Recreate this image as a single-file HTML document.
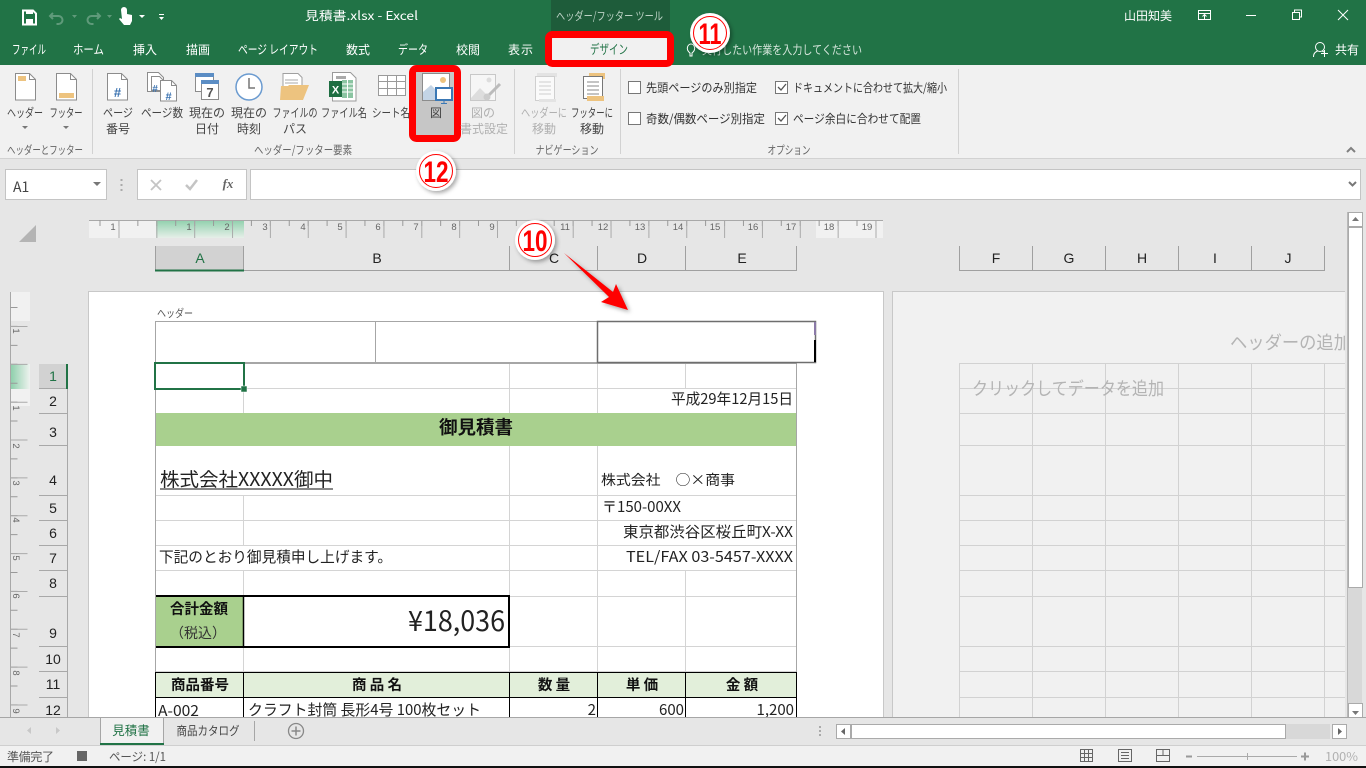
<!DOCTYPE html>
<html lang="ja"><head><meta charset="utf-8"><title>見積書.xlsx - Excel</title>
<style>
html,body{margin:0;padding:0;width:1366px;height:768px;overflow:hidden;background:#e6e6e6}
svg{display:block;position:absolute;left:0;top:0}
text{font-family:"Liberation Sans","Noto Sans CJK JP",sans-serif;font-size:12px;fill:#333}
.r text{font-family:"Noto Sans CJK JP","Liberation Sans",sans-serif}
.w text{fill:#fff}
.c text{text-anchor:middle}
.rb text{font-size:12px;fill:#444;text-anchor:middle}
.cell text{font-family:"Noto Sans CJK JP","Liberation Sans",sans-serif;font-size:15px;fill:#222}
.rul text{font-size:9.5px;fill:#666;text-anchor:middle}
.hd text{font-size:14px;fill:#222;text-anchor:middle}
.th text{font-family:"Noto Sans CJK JP",sans-serif;font-size:14.5px;font-weight:700;fill:#111;text-anchor:middle}
.num text{font-family:"Liberation Sans",sans-serif;font-weight:700;font-size:30px;fill:#f00;text-anchor:middle}
</style></head><body>
<svg width="1366" height="768" viewBox="0 0 1366 768" xmlns="http://www.w3.org/2000/svg">
<defs>
<linearGradient id="gh" x1="0" y1="0" x2="0" y2="1"><stop offset="0" stop-color="#8fd0ac"/><stop offset="1" stop-color="#e6efe9"/></linearGradient>
<linearGradient id="gv" x1="0" y1="0" x2="1" y2="0"><stop offset="0" stop-color="#8fd0ac"/><stop offset="1" stop-color="#eef2ef"/></linearGradient>
<filter id="sh" x="-30%" y="-30%" width="170%" height="170%"><feDropShadow dx="2" dy="2" stdDeviation="2" flood-color="#000" flood-opacity=".35"/></filter>
<clipPath id="p2"><rect x="893" y="292" width="452" height="425"/></clipPath>
</defs>

<!-- chrome -->
<rect width="1366" height="65" fill="#217346"/>
<rect x="551" y="0" width="119" height="32" fill="#1e5c3a"/>
<rect y="65" width="1366" height="93" fill="#f1f1f1"/>
<rect y="158" width="1366" height="1" fill="#d2d2d2"/>

<!-- QAT -->
<g fill="none">
<path d="M23 10.500h10l3 3v11h-13z" stroke="#fff" stroke-width="2"/>
<rect x="26" y="10" width="7" height="4" fill="#fff"/><rect x="26" y="19" width="7" height="5" fill="#fff"/>
<path d="M53 13l-3 3 3 3M50.500 16h8a4 4 0 0 1 0 8h-2" stroke="#5f9a7a" stroke-width="2"/>
<path d="M97 13l3 3-3 3M99.500 16h-8a4 4 0 0 0 0 8h2" stroke="#5f9a7a" stroke-width="2"/>
</g>
<path d="M72 15h5l-2.500 3zM107 15h5l-2.500 3z" fill="#5f9a7a"/>
<path d="M139 15h6l-3 3z" fill="#fff"/>
<path d="M121 10a3 3 0 0 1 6 0v4l5 1v6l-2 4h-6l-5-6 1-1 2 1z" fill="#fff"/>
<path d="M159 14h5v1h-5zM159 17h5l-2.500 3z" fill="#fff"/>

<g class="r w">
<text x="305" y="20" textLength="113" lengthAdjust="spacingAndGlyphs">見積書.xlsx  -  Excel</text>
<text x="556" y="20" textLength="107" lengthAdjust="spacingAndGlyphs" style="font-size:11.500px;fill:#bcd2c5">ヘッダー/フッター ツール</text>
<text x="1124" y="20" textLength="48" lengthAdjust="spacingAndGlyphs">山田知美</text>
<text x="12" y="54" textLength="34" lengthAdjust="spacingAndGlyphs" style="font-size:12.500px">ファイル</text>
<text x="73" y="54" textLength="31" lengthAdjust="spacingAndGlyphs" style="font-size:12.500px">ホーム</text>
<text x="133" y="54" textLength="24">挿入</text>
<text x="186" y="54" textLength="24">描画</text>
<text x="238" y="54" textLength="80" lengthAdjust="spacingAndGlyphs" style="font-size:12.500px">ページ レイアウト</text>
<text x="346" y="54" textLength="24">数式</text>
<text x="398" y="54" textLength="30" lengthAdjust="spacingAndGlyphs" style="font-size:12.500px">データ</text>
<text x="456" y="54" textLength="24">校閲</text>
<text x="508" y="54" textLength="25">表示</text>
<text x="702" y="54" textLength="160" lengthAdjust="spacingAndGlyphs" style="fill:#d5e5db">実行したい作業を入力してください</text>
<text x="1335" y="54" textLength="24">共有</text>
</g>
<!-- bulb -->
<path d="M690 56v-3c-5-4-2-9 1-9s6 5 1 9v3z" fill="none" stroke="#fff"/>
<!-- window controls -->
<g fill="none" stroke="#fff">
<rect x="1198.500" y="10.500" width="12" height="9"/><path d="M1198 13.500h13M1204.500 19v-4M1202.500 16.500l2-2 2 2"/>
<path d="M1246 15.500h10"/>
<rect x="1292.500" y="12.500" width="7" height="7"/><path d="M1294.500 12v-2h7v7h-2"/>
<path d="M1338 10l10 10M1348 10l-10 10"/>
<circle cx="1320" cy="47" r="4.500"/><path d="M1313.500 57c0-4 2-5 4-6M1322 51l2 1"/><path d="M1324.500 50v7M1321 53.500h7"/>
</g>

<!-- design tab + highlight -->
<rect x="548.500" y="34.500" width="122" height="29" rx="4" fill="#f1f1f1" stroke="#f00" stroke-width="7"/>
<text x="609" y="54" text-anchor="middle" textLength="38" lengthAdjust="spacingAndGlyphs" style="font-family:'Noto Sans CJK JP',sans-serif;fill:#217346;font-size:13px">デザイン</text>

<!-- separators -->
<g fill="#d2d2d2"><rect x="92" y="69" width="1" height="85"/><rect x="514" y="69" width="1" height="85"/><rect x="620" y="69" width="1" height="85"/><rect x="958" y="69" width="1" height="85"/></g>
<path d="M1347 152l4-4 4 4" fill="none" stroke="#808080" stroke-width="2"/>

<!-- 図 highlight -->
<rect x="412.500" y="68.500" width="45" height="70" rx="4" fill="#c6c6c6" stroke="#f00" stroke-width="7"/>

<!-- ribbon icons -->
<g fill="#fff" stroke="#8c8c8c">
<path d="M15.500 73.500h14l6 6v20.500h-20z"/>
<path d="M56.500 73.500h14l6 6v20.500h-20z"/>
<path d="M107.500 73.500h14l6 6v20.500h-20z"/>
<path d="M147.500 72.500h11l5 5v14h-16z"/>
<path d="M151.500 76.500h8l4 4v10h-12z"/>
<path d="M160.500 80.500h11l5 5v15.500h-16z"/>
</g>
<path d="M29.500 73.500v6h6M70.500 73.500v6h6M121.500 73.500v6h6M171.500 80.500v5h5" fill="none" stroke="#8c8c8c"/>
<rect x="18" y="76" width="8" height="5" fill="#edc37f"/>
<rect x="59" y="93" width="15" height="5" fill="#edc37f"/>
<text x="117.500" y="97" text-anchor="middle" style="font-size:13px;font-weight:700;fill:#3a72b0">#</text>
<text x="155" y="92" text-anchor="middle" style="font-size:10px;font-weight:700;fill:#3a72b0">#</text>
<text x="168.500" y="100" text-anchor="middle" style="font-size:11px;font-weight:700;fill:#3a72b0">#</text>
<!-- calendar -->
<rect x="195.500" y="73.500" width="18" height="18" fill="#fff" stroke="#8c8c8c"/><rect x="195" y="73" width="19" height="4" fill="#5b8dc4"/>
<rect x="201.500" y="80.500" width="17" height="19" fill="#fff" stroke="#8c8c8c"/><rect x="201" y="80" width="18" height="4" fill="#5b8dc4"/>
<text x="210" y="97" text-anchor="middle" style="font-size:13px;font-weight:700;fill:#555">7</text>
<!-- clock -->
<circle cx="249" cy="87" r="13" fill="#fff" stroke="#6b9bd0" stroke-width="1.500"/><path d="M249 78v10h6" fill="none" stroke="#777" stroke-width="1.500"/>
<!-- folder -->
<path d="M283 73.500h15l4 4v10h-19z" fill="#fff" stroke="#a0a0a0"/>
<path d="M285 80h13M285 83h13" stroke="#aaa"/>
<path d="M280 100l1-14h7l1-1h20l-6 15z" fill="#edc37f"/>
<!-- excel -->
<path d="M332.500 72.500h18l5.500 5.500v23h-23.500z" fill="#fff" stroke="#9a9a9a"/>
<rect x="342" y="80" width="11" height="18" fill="#8bc5a2"/><path d="M342 84h11M342 88h11M342 92h11M347.500 80v18" stroke="#fff"/>
<rect x="336" y="76" width="10" height="3" fill="#aaa"/>
<rect x="329" y="81" width="13" height="16" fill="#1e6e42"/>
<text x="335.500" y="93.500" text-anchor="middle" style="font-size:11px;font-weight:700;fill:#fff">X</text>
<!-- sheet grid -->
<path d="M378.500 75.500h27v20h-27zM378.500 81.500h27M378.500 88.500h27M387.500 75.500v20M396.500 75.500v20" fill="#fff" stroke="#9a9a9a"/>
<!-- picture -->
<rect x="422.500" y="73.500" width="27" height="27" fill="#fff" stroke="#8c8c8c"/>
<circle cx="443" cy="80" r="3" fill="#edc37f"/>
<path d="M423 100v-8l8-7 9 9 1 6z" fill="#c3d4e6"/>
<rect x="436" y="88" width="16" height="12" fill="#fff" stroke="#3a78b5" stroke-width="2"/><path d="M444 100v3M441 103.500h6" stroke="#3a78b5"/>
<!-- picture format -->
<rect x="470.500" y="74.500" width="25" height="26" fill="#f6f6f6" stroke="#c8c8c8"/>
<circle cx="489" cy="80" r="2.500" fill="#ddd"/><path d="M471 98l9-10 8 8-2 4h-15z" fill="#ddd"/>
<path d="M500 84l-11 11" stroke="#bbb" stroke-width="3"/><circle cx="487" cy="97" r="3.500" fill="#ccc"/>
<!-- nav -->
<rect x="537" y="73" width="20" height="4" fill="#e3e3e3"/>
<rect x="535.500" y="76.500" width="19" height="24" fill="#fafafa" stroke="#cfcfcf"/><path d="M539 82h12M539 86h12M539 90h12M539 94h12" stroke="#cfcfcf"/>
<rect x="539" y="99" width="17" height="3" fill="#e3e3e3"/>
<rect x="589" y="73" width="16" height="3" fill="#edc37f"/><rect x="602" y="73" width="3" height="6" fill="#edc37f"/>
<rect x="583.500" y="76.500" width="19" height="22" fill="#fff" stroke="#777"/><path d="M587 82h12M587 86h12M587 90h12M587 94h12" stroke="#888"/>
<rect x="587" y="96" width="17" height="5" fill="#edc37f"/>

<g class="r rb">
<text x="25" y="117" textLength="36" lengthAdjust="spacingAndGlyphs">ヘッダー</text>
<text x="66" y="117" textLength="33" lengthAdjust="spacingAndGlyphs">フッター</text>
<text x="118" y="117" textLength="30" lengthAdjust="spacingAndGlyphs">ページ</text><text x="118" y="133">番号</text>
<text x="162" y="117" textLength="42" lengthAdjust="spacingAndGlyphs">ページ数</text>
<text x="207" y="117">現在の</text><text x="207" y="133">日付</text>
<text x="249" y="117">現在の</text><text x="249" y="133">時刻</text>
<text x="295" y="117" textLength="45" lengthAdjust="spacingAndGlyphs">ファイルの</text><text x="295" y="133">パス</text>
<text x="344" y="117" textLength="46" lengthAdjust="spacingAndGlyphs">ファイル名</text>
<text x="391" y="117" textLength="38" lengthAdjust="spacingAndGlyphs">シート名</text>
<text x="436" y="117">図</text>
<text x="483" y="117" style="fill:#b0b0b0">図の</text><text x="484" y="133" style="fill:#b0b0b0">書式設定</text>
<text x="544" y="117" textLength="46" lengthAdjust="spacingAndGlyphs" style="fill:#b0b0b0">ヘッダーに</text><text x="544" y="133" style="fill:#b0b0b0">移動</text>
<text x="592" y="117" textLength="42" lengthAdjust="spacingAndGlyphs">フッターに</text><text x="592" y="133">移動</text>
<text x="45" y="154" textLength="76" lengthAdjust="spacingAndGlyphs" style="fill:#666;font-size:11.500px">ヘッダーとフッター</text>
<text x="303" y="154" textLength="98" lengthAdjust="spacingAndGlyphs" style="fill:#666;font-size:11.500px">ヘッダー/フッター要素</text>
<text x="567" y="154" textLength="63" lengthAdjust="spacingAndGlyphs" style="fill:#666;font-size:11.500px">ナビゲーション</text>
<text x="789" y="154" textLength="43" lengthAdjust="spacingAndGlyphs" style="fill:#666;font-size:11.500px">オプション</text>
</g>
<path d="M22 126h6l-3 3zM63 126h6l-3 3z" fill="#777"/>

<!-- checkboxes -->
<g fill="#fff" stroke="#777">
<rect x="628.500" y="81.500" width="12" height="12"/><rect x="628.500" y="112.500" width="12" height="12"/>
<rect x="775.500" y="81.500" width="12" height="12"/><rect x="775.500" y="112.500" width="12" height="12"/>
</g>
<path d="M778 87l3 3 5-6M778 118l3 3 5-6" fill="none" stroke="#555" stroke-width="1.300"/>
<g class="r">
<text x="646" y="92" textLength="111" lengthAdjust="spacingAndGlyphs">先頭ページのみ別指定</text>
<text x="646" y="123" textLength="119" lengthAdjust="spacingAndGlyphs">奇数/偶数ページ別指定</text>
<text x="793" y="92" textLength="154" lengthAdjust="spacingAndGlyphs">ドキュメントに合わせて拡大/縮小</text>
<text x="793" y="123" textLength="128" lengthAdjust="spacingAndGlyphs">ページ余白に合わせて配置</text>
</g>

<!-- formula bar -->
<rect x="5.500" y="169.500" width="101" height="30" fill="#fff" stroke="#c4c4c4"/>
<text x="13" y="192" style="font-family:'Noto Sans CJK JP',sans-serif;font-size:14px;fill:#444">A1</text>
<path d="M93 182h8l-4 4z" fill="#777"/>
<path d="M121.500 179v2M121.500 184v2M121.500 189v2" stroke="#aaa" stroke-width="2"/>
<rect x="137.500" y="169.500" width="109" height="30" fill="#fff" stroke="#c4c4c4"/>
<rect x="250.500" y="169.500" width="1110" height="30" fill="#fff" stroke="#c4c4c4"/>
<path d="M151 180l10 10M161 180l-10 10" stroke="#c4c4c4" stroke-width="1.800"/>
<path d="M186 185l4 4 7-9" fill="none" stroke="#c4c4c4" stroke-width="2.500"/>
<text x="228" y="188" text-anchor="middle" style="font-family:'Liberation Serif',serif;font-style:italic;font-weight:700;font-size:13px;fill:#666">fx</text>
<path d="M1349 182l3.500 3.500 3.500-3.500" fill="none" stroke="#777" stroke-width="2"/>

<!-- corner -->
<path d="M36 225v17h-17z" fill="#b4b4b4"/>

<!-- horizontal ruler -->
<rect x="89" y="220" width="67" height="18" fill="#f1f1f1"/>
<rect x="156" y="220" width="88" height="18" fill="url(#gh)"/>
<rect x="816" y="220" width="67" height="18" fill="#f1f1f1"/>
<rect x="89" y="220" width="794" height="1" fill="#a8a8a8"/>
<line x1="99.500" y1="223" x2="883" y2="223" stroke="#999" stroke-width="6" stroke-dasharray="1 17.925"/>
<line x1="118.500" y1="229" x2="883" y2="229" stroke="#aaa" stroke-width="18" stroke-dasharray="1 36.850"/>
<g class="rul">
<text x="113" y="230">1</text><text x="189" y="230">1</text><text x="227" y="230">2</text><text x="265" y="230">3</text><text x="303" y="230">4</text><text x="340" y="230">5</text><text x="378" y="230">6</text><text x="416" y="230">7</text><text x="454" y="230">8</text><text x="492" y="230">9</text><text x="530" y="230">10</text><text x="565" y="230">11</text><text x="603" y="230">12</text><text x="640" y="230">13</text><text x="678" y="230">14</text><text x="715" y="230">15</text><text x="753" y="230">16</text><text x="791" y="230">17</text><text x="829" y="230">18</text><text x="867" y="230">19</text>
</g>

<!-- column headers -->
<rect x="156" y="246" width="88" height="24" fill="#d2d2d2"/>
<path d="M155.500 246v24.500H797M243.500 246v24M509.500 246v24M597.500 246v24M685.500 246v24M796.500 246v25" fill="none" stroke="#a0a0a0"/>
<rect x="155" y="269.500" width="89" height="2" fill="#217346"/>
<path d="M959.500 246v24.500H1325M1032.500 246v24M1105.500 246v24M1178.500 246v24M1251.500 246v24M1324.500 246v24" fill="none" stroke="#a0a0a0"/>
<g class="hd">
<text x="200" y="263" style="fill:#217346">A</text><text x="377" y="263">B</text><text x="554" y="263">C</text><text x="642" y="263">D</text><text x="742" y="263">E</text>
<text x="996" y="263">F</text><text x="1069" y="263">G</text><text x="1142" y="263">H</text><text x="1215" y="263">I</text><text x="1288" y="263">J</text>
</g>

<!-- vertical ruler -->
<rect x="11" y="292" width="19" height="29" fill="#f1f1f1"/>
<rect x="11" y="364" width="19" height="25" fill="url(#gv)"/>
<rect x="11" y="389" width="19" height="17" fill="#f1f1f1"/>
<rect x="10" y="292" width="1" height="425" fill="#a8a8a8"/>
<line x1="14" y1="307" x2="14" y2="717" stroke="#999" stroke-width="7" stroke-dasharray="1 17.925"/>
<line x1="19" y1="326" x2="19" y2="717" stroke="#aaa" stroke-width="17" stroke-dasharray="1 36.850"/>
<g class="rul">
<text transform="translate(13,331) rotate(90)">1</text><text transform="translate(13,408) rotate(90)">1</text><text transform="translate(13,446) rotate(90)">2</text><text transform="translate(13,483) rotate(90)">3</text><text transform="translate(13,520) rotate(90)">4</text><text transform="translate(13,558) rotate(90)">5</text><text transform="translate(13,596) rotate(90)">6</text><text transform="translate(13,635) rotate(90)">7</text><text transform="translate(13,673) rotate(90)">8</text><text transform="translate(13,711) rotate(90)">9</text>
</g>

<!-- row headers -->
<rect x="39" y="364" width="28" height="25" fill="#d2d2d2"/>
<path d="M67.500 389v328M39 388.500h28M39 413.500h28M39 445.500h28M39 495.500h28M39 520.500h28M39 545.500h28M39 570.500h28M39 596.500h28M39 646.500h28M39 671.500h28M39 697.500h28" stroke="#a8a8a8" fill="none"/>
<rect x="66" y="364" width="2" height="25" fill="#217346"/>
<g class="hd">
<text x="53" y="381" style="fill:#217346">1</text><text x="53" y="406">2</text><text x="53" y="437">3</text><text x="53" y="485">4</text><text x="53" y="513">5</text><text x="53" y="538">6</text><text x="53" y="563">7</text><text x="53" y="588">8</text><text x="53" y="638">9</text><text x="53" y="664">10</text><text x="53" y="689">11</text><text x="53" y="715">12</text>
</g>

<!-- page 1 -->
<rect x="88.500" y="291.500" width="795" height="426" fill="#fff" stroke="#c8c8c8"/>
<!-- page 2 -->
<rect x="892.500" y="291.500" width="453" height="426" fill="#f1f1f1" stroke="#c8c8c8"/>

<text x="157" y="317" textLength="36" lengthAdjust="spacingAndGlyphs" style="font-family:'Noto Sans CJK JP',sans-serif;font-size:11px;fill:#555">ヘッダー</text>
<rect x="155.500" y="321.500" width="660" height="41" fill="#fff" stroke="#a6a6a6"/>
<path d="M375.500 321v42" stroke="#a6a6a6"/>

<!-- grid -->
<g stroke="#d4d4d4" fill="none">
<path d="M155 388.500h642M155 495.500h642M155 520.500h642M155 545.500h642M155 570.500h642M510 596.500h287M510 646.500h287M155 671.500h642"/>
<path d="M243.500 364v50M509.500 364v50M597.500 364v50M685.500 364v25"/>
<path d="M509.500 446v226M597.500 446v226M243.500 496v50M243.500 571v26M685.500 571v101M243.500 647v25"/>
</g>
<path d="M155.500 363v355M796.500 363v355M155 363.500h642" fill="none" stroke="#a6a6a6"/>

<!-- fills -->
<rect x="156" y="413" width="640" height="33" fill="#a9d08e"/>
<rect x="156" y="597" width="88" height="50" fill="#a9d08e"/>
<rect x="156" y="673" width="640" height="24" fill="#e2efda"/>

<!-- borders -->
<path d="M155 672.500h642M155 697.500h642M155.500 672v46M243.500 672v46M509.500 672v46M597.500 672v46M685.500 672v46M796.500 672v46" fill="none" stroke="#000"/>
<path d="M156 596h353M509 595v53M156 647h353" fill="none" stroke="#000" stroke-width="2"/>
<path d="M243.500 597v50" stroke="#000" stroke-width="1.500"/>

<!-- selected header cell -->
<rect x="597.500" y="321.500" width="218" height="41" fill="#fff" stroke="#6e6e6e" stroke-width="1.500"/>
<rect x="814" y="322" width="2" height="13" fill="#8b7aa8"/>
<rect x="814" y="340" width="2" height="22" fill="#000"/>

<!-- selected cell -->
<rect x="155" y="363" width="89" height="26" fill="#fff" stroke="#217346" stroke-width="2"/>
<rect x="241" y="386" width="6" height="6" fill="#217346" stroke="#fff" stroke-width=".5"/>

<!-- cell text -->
<g class="cell">
<text x="793" y="404" text-anchor="end" textLength="122" lengthAdjust="spacingAndGlyphs">平成29年12月15日</text>
<text x="476" y="434" text-anchor="middle" style="font-size:18.500px;font-weight:700;fill:#111">御見積書</text>
<text x="160" y="486" textLength="173" lengthAdjust="spacingAndGlyphs" style="font-size:19px">株式会社XXXXX御中</text>
<path d="M160 489h173" stroke="#111" fill="none"/>
<text x="601" y="485" textLength="134" lengthAdjust="spacingAndGlyphs" style="font-size:14px">株式会社　○×商事</text>
<text x="602" y="512" textLength="79" lengthAdjust="spacingAndGlyphs">〒150-00XX</text>
<text x="793" y="537" text-anchor="end" textLength="170" lengthAdjust="spacingAndGlyphs">東京都渋谷区桜丘町X-XX</text>
<text x="793" y="562" text-anchor="end" textLength="167" lengthAdjust="spacingAndGlyphs">TEL/FAX 03-5457-XXXX</text>
<text x="159" y="562" textLength="233" lengthAdjust="spacingAndGlyphs">下記のとおり御見積申し上げます。</text>
<text x="199" y="614" text-anchor="middle" style="font-size:14.500px;font-weight:700;fill:#111">合計金額</text>
<text x="198" y="638" text-anchor="middle" textLength="56" lengthAdjust="spacingAndGlyphs" style="font-size:14px;fill:#333">（税込）</text>
<text x="505" y="631" text-anchor="end" textLength="97" lengthAdjust="spacingAndGlyphs" style="font-size:28px">¥18,036</text>
<text x="158" y="716" textLength="41" lengthAdjust="spacingAndGlyphs">A-002</text>
<text x="248" y="715" textLength="233" lengthAdjust="spacingAndGlyphs">クラフト封筒 長形4号 100枚セット</text>
<text x="596" y="715" text-anchor="end">2</text>
<text x="684" y="715" text-anchor="end">600</text>
<text x="794" y="715" text-anchor="end">1,200</text>
</g>
<g class="th">
<text x="200" y="690">商品番号</text><text x="377" y="690">商 品 名</text><text x="554" y="690">数 量</text><text x="642" y="690">単 価</text><text x="742" y="690">金 額</text>
</g>

<!-- page 2 grid -->
<g clip-path="url(#p2)">
<path d="M959.500 364v354M1032.500 364v354M1105.500 364v354M1178.500 364v354M1251.500 364v354M1324.500 364v354M959 363.500h386M959 388.500h386M959 413.500h386M959 445.500h386M959 495.500h386M959 520.500h386M959 545.500h386M959 570.500h386M959 596.500h386M959 646.500h386M959 671.500h386M959 697.500h386" stroke="#d2d2d2" fill="none"/>
<text x="1230" y="349" textLength="121" lengthAdjust="spacingAndGlyphs" style="font-family:'Noto Sans CJK JP',sans-serif;font-size:18px;fill:#b4b4b4">ヘッダーの追加</text>
<text x="972" y="395" textLength="192" lengthAdjust="spacingAndGlyphs" style="font-family:'Noto Sans CJK JP',sans-serif;font-size:18px;fill:#b4b4b4">クリックしてデータを追加</text>
</g>

<!-- vertical scrollbar -->
<rect x="1345" y="205" width="21" height="513" fill="#e6e6e6"/>
<rect x="1348" y="227" width="14" height="490" fill="#d8d8d8"/>
<rect x="1348.500" y="212.500" width="14" height="14" fill="#fff" stroke="#aaa"/>
<path d="M1352 221h7l-3.500-4z" fill="#777"/>
<rect x="1348.500" y="227.500" width="14" height="360" fill="#fff" stroke="#aaa"/>
<rect x="1348.500" y="703.500" width="14" height="14" fill="#fff" stroke="#aaa"/>
<path d="M1352 711h7l-3.500 4z" fill="#777"/>
<rect x="1347" y="212" width="1" height="506" fill="#b8b8b8"/>

<!-- bottom sheet tabs -->
<rect y="717" width="1366" height="28" fill="#e6e6e6"/>
<rect y="717" width="1366" height="1" fill="#a6a6a6"/>
<path d="M100.500 717v28M163.500 717v28" stroke="#a6a6a6"/>
<rect x="101" y="718" width="62" height="26" fill="#f1f1f1"/>
<rect x="100" y="743" width="64" height="2" fill="#217346"/>
<g class="r c">
<text x="131" y="735" style="fill:#217346;font-size:12.500px">見積書</text>
<text x="208" y="735" textLength="63" lengthAdjust="spacingAndGlyphs" style="fill:#444">商品カタログ</text>
</g>
<rect x="254" y="721" width="1" height="20" fill="#a6a6a6"/>
<circle cx="296" cy="731" r="7.500" fill="none" stroke="#888" stroke-width="1.300"/>
<path d="M296 726.500v9M291.500 731h9" stroke="#888" stroke-width="1.500"/>
<path d="M31 727v7l-4-3.500zM56 727v7l4-3.500z" fill="#c8c8c8"/>
<path d="M820 726v2M820 730v2M820 734v2" stroke="#aaa" stroke-width="2"/>
<!-- hscroll -->
<rect x="851" y="724" width="479" height="15" fill="#d8d8d8"/>
<rect x="836.500" y="724.500" width="14" height="14" fill="#fff" stroke="#aaa"/>
<path d="M845 728v7l-4-3.500z" fill="#666"/>
<rect x="851.500" y="724.500" width="434" height="14" fill="#fff" stroke="#aaa"/>
<rect x="1332.500" y="724.500" width="14" height="14" fill="#fff" stroke="#aaa"/>
<path d="M1338 728v7l4-3.500z" fill="#666"/>

<!-- status bar -->
<rect y="745" width="1366" height="21" fill="#f1f1f1"/>
<rect y="745" width="1366" height="1" fill="#cfcfcf"/>
<rect y="766" width="1366" height="2" fill="#111"/>
<g class="r">
<text x="7" y="761" textLength="47" style="fill:#555">準備完了</text>
<text x="109" y="761" textLength="57" lengthAdjust="spacingAndGlyphs" style="fill:#555">ページ: 1/1</text>
<text x="1325" y="761" textLength="33" lengthAdjust="spacingAndGlyphs" style="fill:#b0b0b0">100%</text>
</g>
<rect x="77" y="751" width="10" height="10" fill="#666"/>
<g fill="none" stroke="#666">
<path d="M1080.500 749.500h12v12h-12zM1084.500 749.500v12M1088.500 749.500v12M1080.500 753.500h12M1080.500 757.500h12"/>
<rect x="1118.500" y="749.500" width="13" height="12"/><path d="M1121 752.500h8M1121 755.500h8M1121 758.500h8"/>
<path d="M1156.500 749.500h13v12h-13zM1156.500 755.500h6.500v-6M1163 755.500h6.500"/>
</g>
<path d="M1186 756.500h6" stroke="#999" stroke-width="2"/>
<path d="M1197 756.500h100M1247.500 753v7" stroke="#aaa"/>
<path d="M1301 756.500h8M1305 752.500v8" stroke="#999" stroke-width="2"/>

<!-- annotations -->
<polygon points="564,253 613,292 616,284 628,310 601,302 609,297" fill="#f00" filter="url(#sh)"/>
<g class="num">
<circle cx="535" cy="240" r="20" fill="#fff" filter="url(#sh)"/><circle cx="535" cy="240" r="16.500" fill="#fff" stroke="#f00"/>
<text x="535" y="251" textLength="25" lengthAdjust="spacingAndGlyphs">10</text>
<circle cx="710" cy="33" r="20" fill="#fff" filter="url(#sh)"/><circle cx="710" cy="33" r="16.500" fill="#fff" stroke="#f00"/>
<text x="710" y="44" textLength="23" lengthAdjust="spacingAndGlyphs">11</text>
<circle cx="436" cy="171" r="20" fill="#fff" filter="url(#sh)"/><circle cx="436" cy="171" r="16.500" fill="#fff" stroke="#f00"/>
<text x="436" y="182" textLength="25" lengthAdjust="spacingAndGlyphs">12</text>
</g>
</svg>
</body></html>
